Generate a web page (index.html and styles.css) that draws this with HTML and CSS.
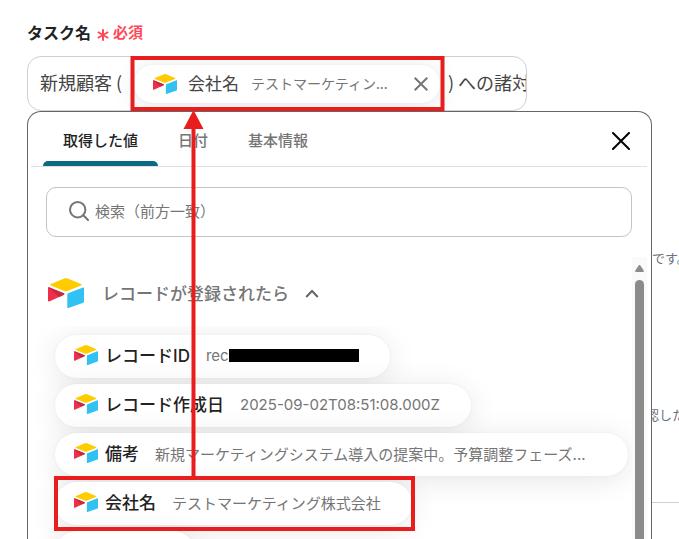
FILE: index.html
```html
<!DOCTYPE html>
<html lang="ja">
<head>
<meta charset="utf-8">
<title>タスク名</title>
<link rel="stylesheet" href="styles.css">
</head>
<body>
<svg class="defs" aria-hidden="true">
  <symbol id="logo" viewBox="0 0 36 30">
    <path fill="#fc0" d="M16.3.4a4.6 4.6 0 0 1 3.4 0L33 5.9c1 .4 1 1.3 0 1.700l-13.400 5.300a5 5 0 0 1-3.400 0L2.900 7.600c-1-.4-1-1.300 0-1.700z"/>
    <path fill="#31c2f2" d="M19.300 16.400c0-.5.3-.9.8-1.100L35 9.500c.5-.2 1 .1 1 .6v13.500c0 .5-.3.900-.7 1.100L20.400 30c-.6.200-1.100-.1-1.100-.6z"/>
    <path fill="#ed3049" d="M0 10c0-.6.500-.9 1-.7l14.800 6c.8.300.8 1 .1 1.400L1.300 23.500C.600 23.800 0 23.500 0 22.800z"/>
    <path fill="#c62842" d="M1 9.300l14.800 6c.8.300.8 1 .1 1.400l-4.700 2.200L.3 9.500q.3-.3.700-.2z"/>
  </symbol>
</svg>

<main class="page">
  <div class="label-row">
    <span id="task-label">タスク名</span>
    <span class="required">
      <svg class="star" viewBox="0 0 12 12"><path d="M6 .2v11.600M.8 3l10.400 6M11.200 3L.8 9"/></svg>
      必須
    </span>
  </div>
  <div class="field" role="textbox" tabindex="0" aria-labelledby="task-label">
    <span class="before">新規顧客 (</span>
    <span class="token">
      <svg class="logo"><use href="#logo"/></svg>
      <span class="token-name">会社名</span>
      <span class="token-value">テストマーケティン...</span>
      <button class="icon-button" type="button" aria-label="削除"><svg class="remove" viewBox="0 0 14 14"><path d="M.7.7l12.600 12.600M13.300.7L.7 13.300"/></svg></button>
    </span>
    <span class="after">) への諸対</span>
  </div>
  <p class="hint first">です。</p>
  <p class="hint second">認した</p>
  <hr class="rule">
</main>

<section class="popup">
  <header class="tabs">
    <button class="tab active" type="button">取得した値</button>
    <button class="tab" type="button">日付</button>
    <button class="tab" type="button">基本情報</button>
    <button class="icon-button close-button" type="button" aria-label="閉じる"><svg class="close" viewBox="0 0 18 18"><path d="M1 1l16 16M17 1L1 17"/></svg></button>
  </header>
  <label class="search">
    <svg class="glass" viewBox="0 0 20 20"><circle cx="8.700" cy="8.700" r="7.700"/><path d="M14.300 14.300l4.700 4.700"/></svg>
    <input type="text" placeholder="検索（前方一致）">
  </label>
  <div class="results">
    <div class="groups">
      <button class="group" type="button">
        <svg class="logo large"><use href="#logo"/></svg>
        <span>レコードが登録されたら</span>
        <svg class="chevron" viewBox="0 0 14 9"><path d="M1.200 8L7 2l5.800 6"/></svg>
      </button>
      <div class="chips">
        <button class="chip" type="button"><svg class="logo"><use href="#logo"/></svg><b>レコードID</b><span class="value">rec<i class="redacted"></i></span></button>
        <button class="chip" type="button"><svg class="logo"><use href="#logo"/></svg><b>レコード作成日</b><span class="value">2025-09-02T08:51:08.000Z</span></button>
        <button class="chip" type="button"><svg class="logo"><use href="#logo"/></svg><b>備考</b><span class="value long">新規マーケティングシステム導入の提案中。予算調整フェーズ...</span></button>
        <button class="chip" type="button"><svg class="logo"><use href="#logo"/></svg><b>会社名</b><span class="value">テストマーケティング株式会社</span></button>
        <div class="chip partial"></div>
      </div>
    </div>
    <div class="scrollbar">
      <svg class="up" viewBox="0 0 9 7"><path d="M4.500 0Q5 0 5.400.6L8.800 5.700Q9.200 7 8 7H1Q-.2 7 .2 5.700L3.600.6Q4 0 4.500 0z"/></svg>
      <div class="thumb"></div>
    </div>
  </div>
</section>

<svg class="annotations" aria-hidden="true">
  <rect x="132.500" y="58" width="310" height="51"/>
  <rect x="56" y="478" width="357" height="51"/>
  <path d="M193.500 476V126"/>
  <path class="head" d="M193.500 110l10 19h-20z"/>
</svg>
</body>
</html>
```

FILE: styles.css
```css
* { box-sizing: border-box; }

body {
  margin: 0;
  height: 100vh;
  overflow: hidden;
  position: relative;
  background: #fff;
  color: #222;
  font-family: Inter, "Noto Sans CJK JP", sans-serif;
  font-size: 15px;
}

button, input { font: inherit; color: inherit; }
button { border: 0; padding: 0; background: none; white-space: nowrap; }
svg { display: block; flex: none; fill: none; }
.defs { position: absolute; width: 0; height: 0; }

.page { padding: 20px 0 0 27px; }

.label-row {
  display: flex;
  align-items: center;
  gap: 6px;
  height: 24px;
  margin-bottom: 12px;
  font-size: 16px;
  font-weight: 600;
}
.required {
  display: flex;
  align-items: flex-end;
  gap: 4px;
  padding-top: 2px;
  color: #ff4757;
  font-size: 15px;
  line-height: 20px;
}
.star { width: 12px; height: 12px; margin-bottom: 2px; stroke: #ff4757; stroke-width: 2; }

.field {
  display: flex;
  align-items: center;
  width: calc((100% - 27px) * 0.8);
  height: 55px;
  padding-left: 12px;
  border: 1px solid #cdd0d8;
  border-radius: 14px;
  overflow: hidden;
  white-space: nowrap;
  color: #444;
  font-family: "Noto Sans CJK JP", sans-serif;
  font-size: 18px;
}
.before, .after { flex: none; padding-bottom: 4px; }
.before { width: 94px; }
.after { margin-left: 8px; }
.token {
  display: flex;
  flex: none;
  align-items: center;
  width: 306px;
  height: 38px;
  padding: 0 12px 0 19px;
  border-radius: 19px;
  background: #fff;
  box-shadow: 0 0 3px #0000000d, 0 4px 26px #0000001a;
}
.token-name { margin: 0 12px 0 11px; padding-bottom: 2px; font-size: 17px; }
.token-value {
  margin-right: auto;
  padding-bottom: 2px;
  color: #757575;
  font-size: 14px;
}
.icon-button { flex: none; }
.remove { width: 14px; height: 14px; stroke: #757575; stroke-width: 2; }

.logo { width: 24px; height: 20px; }
.logo.large { width: 36px; height: 30px; }

.hint {
  margin: 0 0 0 calc(100% - 27px);
  color: #6b7280;
  font-size: 13px;
  line-height: 20px;
  white-space: nowrap;
}
.hint.first { margin-top: 137px; }
.hint.second { margin-top: 137px; margin-left: calc(100% - 33px); }
.rule { margin: 77px 0 0; border: 0; border-top: 1px solid #cdd0d8; }

.popup {
  position: absolute;
  top: 111px;
  right: 27px;
  bottom: 0;
  left: 27px;
  display: flex;
  flex-direction: column;
  padding: 0 4px 0 3px;
  border: 1px solid #666;
  border-bottom: 0;
  border-radius: 14px 14px 0 0;
  background: #fff;
}

.tabs {
  display: flex;
  flex: none;
  height: 55px;
  padding: 0 17px 0 12px;
  border-bottom: 1px solid #e0e0e0;
}
.tab {
  position: relative;
  padding: 0 20px;
  color: #757575;
  font-weight: 500;
}
.tab.active { color: #222; }
.tab.active::after {
  content: "";
  position: absolute;
  right: 0;
  bottom: 0;
  left: 0;
  height: 5px;
  border-radius: 5px 5px 0 0;
  background: #0b6b82;
}
.close-button { margin-left: auto; padding-top: 4px; }
.close { width: 18px; height: 18px; stroke: #000; stroke-width: 2; stroke-linecap: round; }

.search {
  display: flex;
  flex: none;
  align-items: center;
  gap: 6px;
  height: 50px;
  margin: 20px 15px;
  padding: 0 0 2px 22px;
  border: 1px solid #c4c4c4;
  border-radius: 10px;
}
.glass { width: 20px; height: 20px; stroke: #757575; stroke-width: 2; stroke-linecap: round; }
.search input { flex: 1; min-width: 0; padding: 0; border: 0; outline: 0; background: none; }
.search input::placeholder { color: #757575; opacity: 1; }

.results { display: flex; flex: 1; min-height: 0; overflow: hidden; }
.groups { flex: 1; min-width: 0; overflow: hidden; }
.group {
  display: flex;
  align-items: center;
  height: 30px;
  margin: 21px 0 18px 17px;
  color: #757575;
  font-size: 17px;
  font-weight: 500;
}
.group span { margin: 0 16px 0 18px; padding-bottom: 2px; }
.chevron { width: 14px; height: 9px; stroke: #666; stroke-width: 2; }

.chips {
  display: flex;
  flex-direction: column;
  align-items: flex-start;
  gap: 6px;
  padding: 9px 0 40px 24px;
  overflow: hidden;
}
.chip {
  display: flex;
  flex: none;
  align-items: center;
  height: 43px;
  padding: 0 31px 3px 19px;
  border-radius: 22px;
  background: #fff;
  box-shadow: 0 0 3px #0000000d, 0 4px 30px #0000001a;
}
.chip b { margin: 0 16px 0 7px; padding-bottom: 2px; font-size: 17px; font-weight: 500; }
.chip.partial { width: 140px; }
.value { display: flex; align-items: center; color: #757575; }
.value.long { width: 442px; }
.redacted { width: 130px; height: 13px; background: #000; }

.scrollbar {
  display: flex;
  flex: none;
  flex-direction: column;
  align-items: center;
  gap: 8px;
  width: 15px;
  padding-top: 8px;
  background: #fafafa;
}
.up { width: 9px; height: 7px; fill: #8b8b8b; }
.thumb { flex: 1; width: 9px; border-radius: 5px 5px 0 0; background: #8b8b8b; }

.annotations {
  position: absolute;
  top: 0;
  left: 0;
  width: 100%;
  height: 100%;
  stroke: #e81e1e;
  stroke-width: 4;
  pointer-events: none;
}
.annotations .head { fill: #e81e1e; stroke: none; }
```
